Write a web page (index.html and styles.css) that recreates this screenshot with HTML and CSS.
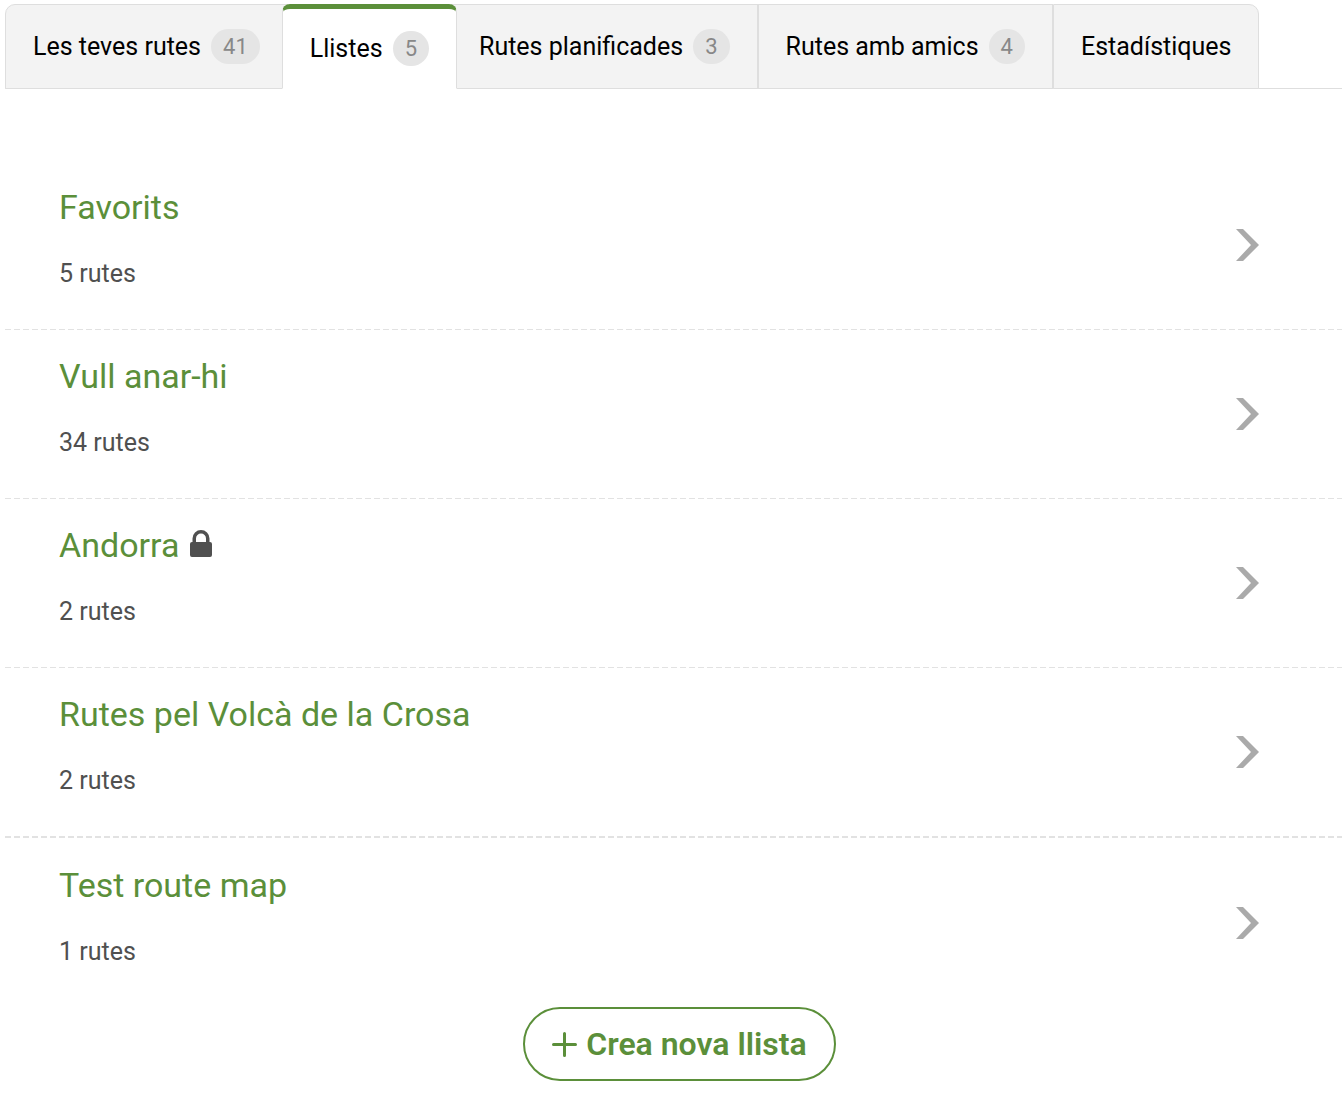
FILE: index.html
```html
<!DOCTYPE html>
<html lang="ca">
<head>
    <meta charset="UTF-8">
    <meta name="viewport" content="width=device-width, initial-scale=1.0">
    <title>Llistes</title>
    <link rel="stylesheet" href="styles.css">
</head>
<body>
    <nav class="tabs">
        <a href="#rutes" class="tab">Les teves rutes <span class="badge">41</span></a>
        <a href="#llistes" class="tab active" aria-current="page">Llistes <span class="badge">5</span></a>
        <a href="#planificades" class="tab">Rutes planificades <span class="badge">3</span></a>
        <a href="#amics" class="tab">Rutes amb amics <span class="badge">4</span></a>
        <a href="#estadistiques" class="tab">Estadístiques</a>
    </nav>

    <main>
        <ul class="lists">
            <li class="list">
                <div class="list-info">
                    <h2><a href="#favorits">Favorits</a></h2>
                    <p>5 rutes</p>
                </div>
                <svg class="chevron" viewBox="0 0 23 32"><path d="M0 0h7l16 16-16 16H0l15-16z"/></svg>
            </li>
            <li class="list">
                <div class="list-info">
                    <h2><a href="#vull-anar-hi">Vull anar-hi</a></h2>
                    <p>34 rutes</p>
                </div>
                <svg class="chevron" viewBox="0 0 23 32"><path d="M0 0h7l16 16-16 16H0l15-16z"/></svg>
            </li>
            <li class="list">
                <div class="list-info">
                    <h2>
                        <a href="#andorra">Andorra</a>
                        <svg class="lock" viewBox="0 0 22 27"><path d="M2.500 12V8.500a8.500 8.500 0 0 1 17 0V12H20a2 2 0 0 1 2 2v11a2 2 0 0 1-2 2H2a2 2 0 0 1-2-2V14a2 2 0 0 1 2-2zM6 12h10V8.500a5 5 0 0 0-10 0z"/></svg>
                    </h2>
                    <p>2 rutes</p>
                </div>
                <svg class="chevron" viewBox="0 0 23 32"><path d="M0 0h7l16 16-16 16H0l15-16z"/></svg>
            </li>
            <li class="list">
                <div class="list-info">
                    <h2><a href="#volca-crosa">Rutes pel Volcà de la Crosa</a></h2>
                    <p>2 rutes</p>
                </div>
                <svg class="chevron" viewBox="0 0 23 32"><path d="M0 0h7l16 16-16 16H0l15-16z"/></svg>
            </li>
            <li class="list">
                <div class="list-info">
                    <h2><a href="#test">Test route map</a></h2>
                    <p>1 rutes</p>
                </div>
                <svg class="chevron" viewBox="0 0 23 32"><path d="M0 0h7l16 16-16 16H0l15-16z"/></svg>
            </li>
        </ul>

        <div class="actions">
            <button type="button" class="btn">
                <svg class="plus" viewBox="0 0 25 25"><path d="M12.500 1.500v22M1.500 12.500h22"/></svg>
                Crea nova llista
            </button>
        </div>
    </main>
</body>
</html>
```
FILE: styles.css
```css
* {
    margin: 0;
    padding: 0;
    box-sizing: border-box;
}

body {
    background: white;
    padding: 4px 0 14px 5px;
    color: #505050;
    font-family: Roboto, sans-serif;
    font-size: 25px;
}

a {
    color: inherit;
    text-decoration: none;
}

.tabs {
    display: flex;
    height: 85px;
    border-bottom: 1px solid #dedede;
}

.tab {
    display: flex;
    align-items: center;
    gap: 10px;
    height: 85px;
    padding: 0 27px;
    background: #f3f3f3;
    border: 1px solid #dedede;
    color: black;
    white-space: nowrap;
}

.tab:first-child {
    border-top-left-radius: 10px;
}

.tab:last-child {
    border-top-right-radius: 10px;
}

/* the open tab sits over the edges of its neighbours */
.tab.active {
    position: relative;
    margin: 0 -6px;
    background: white;
    border-top: 5px solid #5b8f3a;
    border-bottom-color: white;
    border-radius: 8px 8px 0 0;
}

.badge {
    padding: 0 12px;
    border-radius: 18px;
    background: #e5e5e5;
    color: #888;
    font-size: 22px;
    line-height: 35px;
}

.lists {
    margin-top: 72px;
    list-style: none;
}

.list {
    display: flex;
    align-items: center;
    justify-content: space-between;
    padding: 0 83px 1px 54px;
    background: repeating-linear-gradient(to right, #e2e2e2 0 6px, transparent 6px 9px) bottom / 100% 1px no-repeat;
}

.list:nth-last-child(2) {
    padding-bottom: 2px;
    background-size: 100% 2px;
}

.list:last-child {
    padding-top: 1px;
    padding-bottom: 0;
    background: none;
}

.list-info {
    padding: 26px 0 35px;
}

.list h2 {
    margin-bottom: 27px;
    color: #5b8f3a;
    font-size: 34px;
    font-weight: 400;
    line-height: 40px;
}

.list p {
    line-height: 40px;
}

.chevron {
    width: 23px;
    height: 32px;
    fill: #aaa;
}

.lock {
    width: 22px;
    height: 27px;
    margin-left: 2px;
    fill: #505050;
}

.actions {
    display: flex;
    justify-content: center;
    padding-left: 12px;
}

.btn {
    display: flex;
    align-items: center;
    gap: 9px;
    height: 74px;
    padding: 0 27px;
    background: white;
    border: 2px solid #5b8f3a;
    border-radius: 37px;
    color: #5b8f3a;
    font-family: inherit;
    font-size: 32px;
    font-weight: 600;
    cursor: pointer;
}

.plus {
    width: 25px;
    height: 25px;
    fill: none;
    stroke: #5b8f3a;
    stroke-width: 3;
    stroke-linecap: round;
}
```
